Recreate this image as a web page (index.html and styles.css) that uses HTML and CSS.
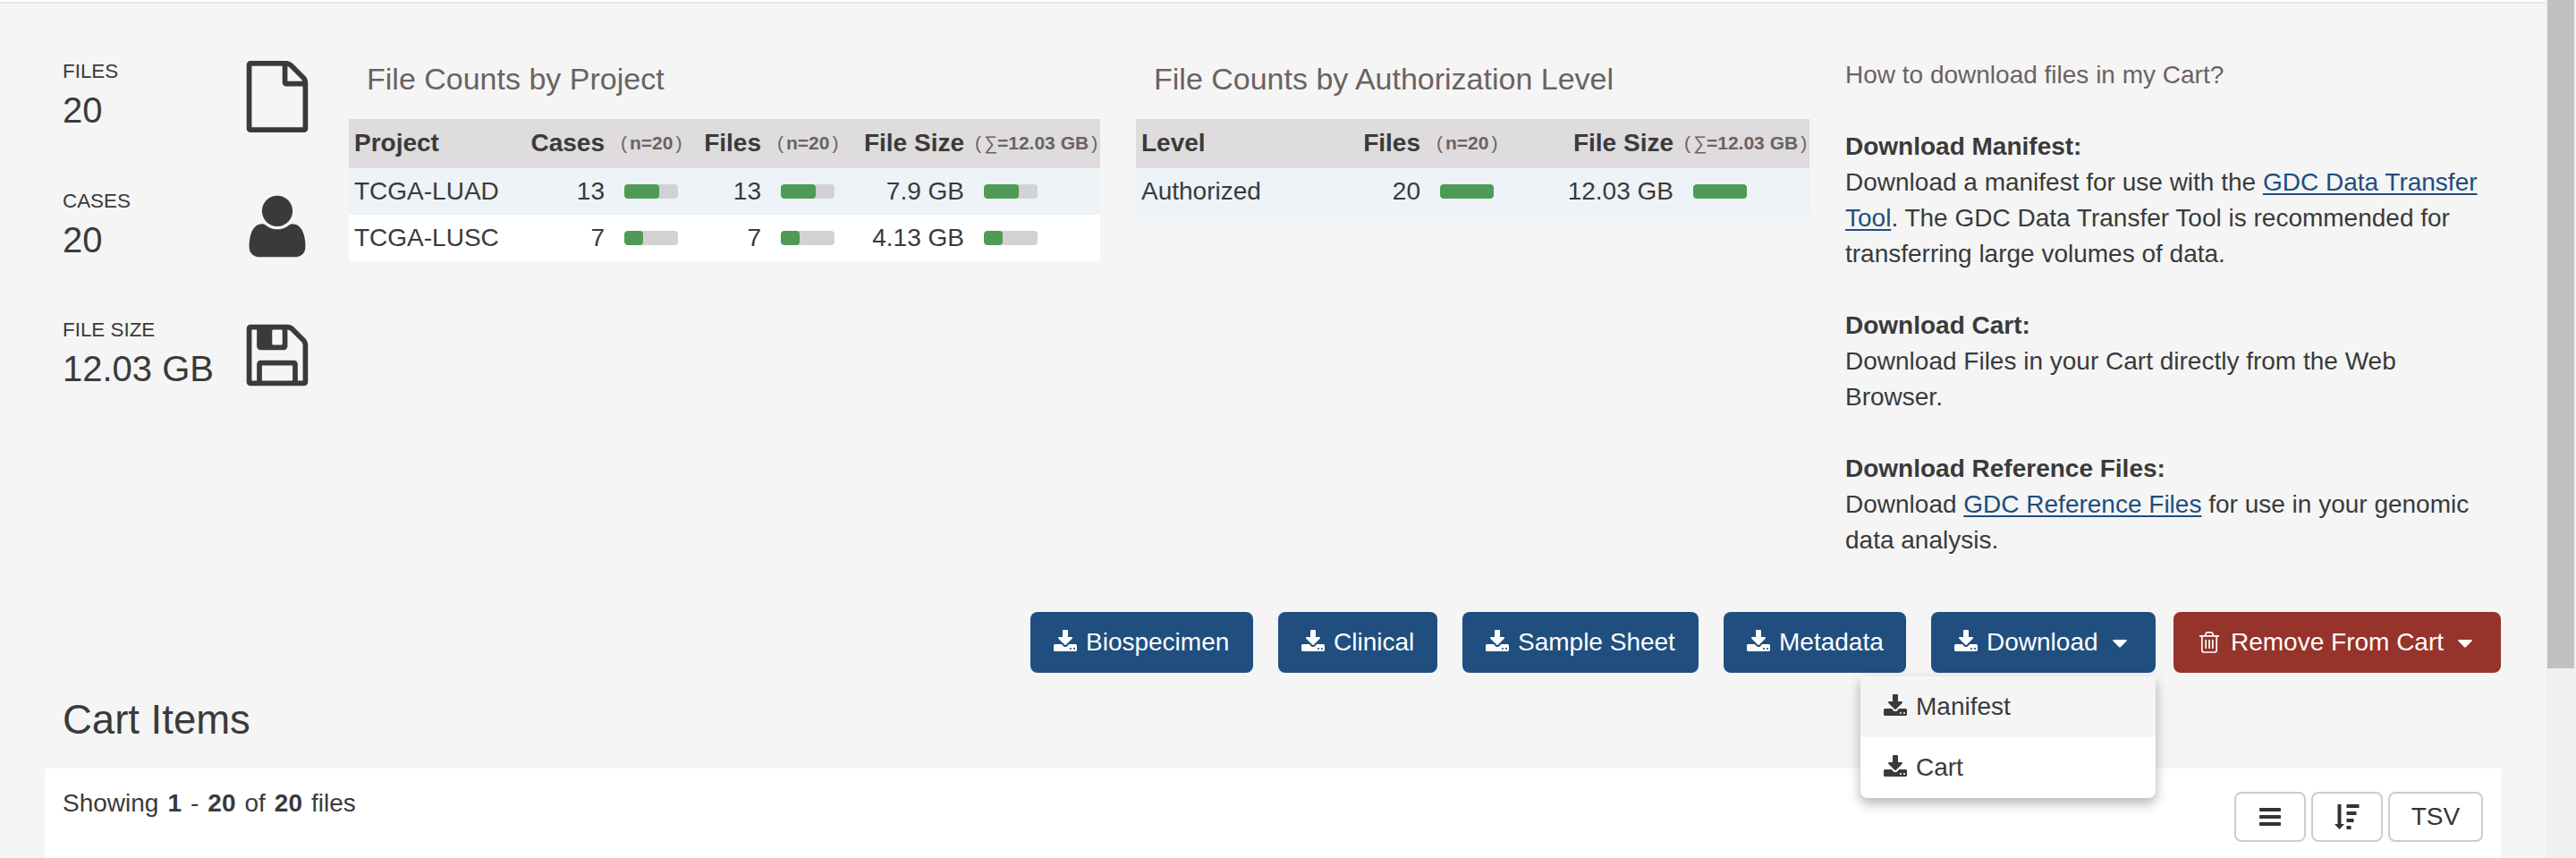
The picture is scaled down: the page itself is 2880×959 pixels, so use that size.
FILE: index.html
```html
<!DOCTYPE html>
<html lang="en">
<head>
<meta charset="utf-8">
<title>Cart</title>
<link rel="stylesheet" href="styles.css">
</head>
<body>
<svg class="sprite" aria-hidden="true">
  <symbol id="i-file" viewBox="0 0 1792 1792"><path d="M1596 380q28 28 48 76t20 88v1152q0 40-28 68t-68 28h-1344q-40 0-68-28t-28-68v-1600q0-40 28-68t68-28h896q40 0 88 20t76 48zm-444-244v376h376q-10-29-22-41l-313-313q-12-12-41-22zm384 1528v-1024h-416q-40 0-68-28t-28-68v-416h-768v1536h1280z"/></symbol>
  <symbol id="i-user" viewBox="0 0 1792 1792"><path d="M1600 1405q0 120-73 189.5t-194 69.5h-874q-121 0-194-69.5t-73-189.5q0-53 3.5-103.5t14-109 26.5-108.5 43-97.5 62-81 85.5-53.5 111.5-20q9 0 42 21.5t74.5 48 108 48 133.5 21.5 133.5-21.5 108-48 74.5-48 42-21.5q61 0 111.5 20t85.5 53.5 62 81 43 97.5 26.5 108.5 14 109 3.5 103.5zm-320-893q0 159-112.5 271.5t-271.5 112.5-271.5-112.5-112.5-271.5 112.5-271.5 271.5-112.5 271.5 112.5 112.5 271.5z"/></symbol>
  <symbol id="i-floppy" viewBox="0 0 1792 1792"><path d="M512 1536h768v-384h-768v384zm896 0h128v-896q0-14-10-38.5t-20-34.5l-281-281q-10-10-34-20t-39-10v416q0 40-28 68t-68 28h-576q-40 0-68-28t-28-68v-416h-128v1280h128v-416q0-40 28-68t68-28h832q40 0 68 28t28 68v416zm-384-928v-320q0-13-9.5-22.5t-22.5-9.5h-192q-13 0-22.5 9.5t-9.5 22.5v320q0 13 9.5 22.5t22.5 9.5h192q13 0 22.5-9.5t9.5-22.5zm640 32v928q0 40-28 68t-68 28h-1344q-40 0-68-28t-28-68v-1344q0-40 28-68t68-28h928q40 0 88 20t76 48l280 280q28 28 48 76t20 88z"/></symbol>
  <symbol id="i-download" viewBox="64 0 1664 1536"><path d="M1344 1344q0-26-19-45t-45-19-45 19-19 45 19 45 45 19 45-19 19-45zm256 0q0-26-19-45t-45-19-45 19-19 45 19 45 45 19 45-19 19-45zm128-224v320q0 40-28 68t-68 28h-1472q-40 0-68-28t-28-68v-320q0-40 28-68t68-28h465l135 136q58 56 136 56t136-56l136-136h464q40 0 68 28t28 68zm-325-569q17 41-14 70l-448 448q-18 19-45 19t-45-19l-448-448q-31-29-14-70 17-39 59-39h256v-448q0-26 19-45t45-19h256q26 0 45 19t19 45v448h256q42 0 59 39z"/></symbol>
  <symbol id="i-trash" viewBox="0 0 22 24"><path d="M0 4.800H22M2.800 5V20.500Q2.800 23 5 23H17Q19.200 23 19.200 20.500V5M6.300 4.500L7.500 1.700Q8 .9 9 .9H13Q14 .9 14.500 1.700L15.700 4.500M7.200 9V19M11 9V19M14.800 9V19" fill="none" stroke="currentColor" stroke-width="1.700"/></symbol>
  <symbol id="i-caret" viewBox="0 0 18 10"><path d="M1 0H17Q18.500 .3 17.500 1.500L10 9.300Q9 10.300 8 9.300L.5 1.500Q-.5 .3 1 0z"/></symbol>
  <symbol id="i-bars" viewBox="0 0 24 20"><rect width="24" height="4" rx="1"/><rect y="8" width="24" height="4" rx="1"/><rect y="16" width="24" height="4" rx="1"/></symbol>
  <symbol id="i-sort" viewBox="0 0 28 28"><path d="M3.500 0h4v22h3.500L5.500 28 0 22h3.500zM13.500 0h14v4h-14zM13.500 8h11v4h-11zM13.500 16h8v4h-8zM13.500 24h5v4h-5z"/></symbol>
</svg>

<div class="viewport">
  <main class="page">
    <section class="summary">
      <div class="stats">
        <div class="stat"><div><div class="stat-label">FILES</div><div class="stat-value">20</div></div><svg class="stat-icon"><use href="#i-file"/></svg></div>
        <div class="stat"><div><div class="stat-label">CASES</div><div class="stat-value">20</div></div><svg class="stat-icon"><use href="#i-user"/></svg></div>
        <div class="stat"><div><div class="stat-label">FILE SIZE</div><div class="stat-value">12.03 GB</div></div><svg class="stat-icon"><use href="#i-floppy"/></svg></div>
      </div>

      <div class="counts counts-project">
        <h2 class="counts-title">File Counts by Project</h2>
        <table class="table">
          <colgroup><col class="p1"><col class="p2"><col class="p3"><col class="p4"><col class="p5"><col class="p6"><col class="p7"></colgroup>
          <thead><tr><th>Project</th><th class="num">Cases</th><th class="total"><span class="paren">(</span>n=20<span class="paren">)</span></th><th class="num">Files</th><th class="total"><span class="paren">(</span>n=20<span class="paren">)</span></th><th class="num">File Size</th><th class="total sum"><span class="paren">(</span><span class="sigma">∑</span>=12.03 GB<span class="paren">)</span></th></tr></thead>
          <tbody>
            <tr><td>TCGA-LUAD</td><td class="num">13</td><td><div class="bar"><div class="fill" style="width:65%"></div></div></td><td class="num">13</td><td><div class="bar"><div class="fill" style="width:65%"></div></div></td><td class="num">7.9 GB</td><td class="size-bar"><div class="bar"><div class="fill" style="width:65.600%"></div></div></td></tr>
            <tr><td>TCGA-LUSC</td><td class="num">7</td><td><div class="bar"><div class="fill" style="width:35%"></div></div></td><td class="num">7</td><td><div class="bar"><div class="fill" style="width:35%"></div></div></td><td class="num">4.13 GB</td><td class="size-bar"><div class="bar"><div class="fill" style="width:34.400%"></div></div></td></tr>
          </tbody>
        </table>
      </div>

      <div class="counts counts-level">
        <h2 class="counts-title">File Counts by Authorization Level</h2>
        <table class="table">
          <colgroup><col class="l1"><col class="l2"><col class="l3"><col class="l4"><col class="l5"></colgroup>
          <thead><tr><th>Level</th><th class="num">Files</th><th class="total"><span class="paren">(</span>n=20<span class="paren">)</span></th><th class="num">File Size</th><th class="total sum"><span class="paren">(</span><span class="sigma">∑</span>=12.03 GB<span class="paren">)</span></th></tr></thead>
          <tbody>
            <tr><td>Authorized</td><td class="num">20</td><td><div class="bar"><div class="fill" style="width:100%"></div></div></td><td class="num">12.03 GB</td><td class="size-bar"><div class="bar"><div class="fill" style="width:100%"></div></div></td></tr>
          </tbody>
        </table>
      </div>

      <div class="help">
        <p class="help-title">How to download files in my Cart?</p>
        <p><strong>Download Manifest:</strong><br>Download a manifest for use with the <a href="#">GDC Data Transfer<br>Tool</a>. The GDC Data Transfer Tool is recommended for<br>transferring large volumes of data.</p>
        <p><strong>Download Cart:</strong><br>Download Files in your Cart directly from the Web<br>Browser.</p>
        <p><strong>Download Reference Files:</strong><br>Download <a href="#">GDC Reference Files</a> for use in your genomic<br>data analysis.</p>
      </div>
    </section>

    <div class="actions">
      <button class="btn w-bio"><svg class="dl"><use href="#i-download"/></svg>Biospecimen</button>
      <button class="btn w-clin"><svg class="dl"><use href="#i-download"/></svg>Clinical</button>
      <button class="btn w-sheet"><svg class="dl"><use href="#i-download"/></svg>Sample Sheet</button>
      <button class="btn w-meta"><svg class="dl"><use href="#i-download"/></svg>Metadata</button>
      <div class="dropdown">
        <button class="btn w-down"><svg class="dl"><use href="#i-download"/></svg>Download<svg class="caret"><use href="#i-caret"/></svg></button>
        <div class="menu">
          <div class="menu-item active"><svg class="dl"><use href="#i-download"/></svg>Manifest</div>
          <div class="menu-item"><svg class="dl"><use href="#i-download"/></svg>Cart</div>
        </div>
      </div>
      <button class="btn btn-remove"><svg class="trash"><use href="#i-trash"/></svg>Remove From Cart<svg class="caret"><use href="#i-caret"/></svg></button>
    </div>

    <h1 class="items-title">Cart Items</h1>
    <section class="panel">
      <div class="showing"><span>Showing</span><strong>1</strong><span>-</span><strong>20</strong><span>of</span><strong>20</strong><span>files</span></div>
      <div class="tools">
        <button class="tool"><svg class="bars"><use href="#i-bars"/></svg></button>
        <button class="tool"><svg class="sort"><use href="#i-sort"/></svg></button>
        <button class="tool tool-tsv">TSV</button>
      </div>
    </section>
  </main>
  <div class="scrollbar"><div class="thumb"></div></div>
</div>
</body>
</html>
```
FILE: styles.css
```css
* { box-sizing: border-box; }
body {
  margin: 0;
  background: #f5f5f5;
  color: #3a3a3a;
  font: 28px/40px "Liberation Sans", Arial, sans-serif;
}
.sprite { display: none; }
svg { fill: currentColor; flex: none; }
h1, h2, p { margin: 0; font-weight: 400; }
button { font: inherit; color: inherit; padding: 0; margin: 0; border: 0; }

.viewport { display: flex; height: 959px; overflow: hidden; }
.page {
  width: 2846px;
  padding: 0 50px;
  background: linear-gradient(#fff 0 2px, #e7e7e7 2px 4px, #f5f5f5 4px);
}
.scrollbar { width: 34px; padding: 0 2px; background: #f0f0f0; }
.thumb { height: 747px; background: #c1c1c1; }

.summary { display: flex; height: 684px; padding: 64px 0 0 20px; }

.stats { width: 320px; display: flex; flex-direction: column; gap: 64.500px; }
.stat { display: flex; justify-content: space-between; width: 280px; height: 80px; }
.stat-label { font-size: 22.400px; line-height: 31px; }
.stat-value { font-size: 40px; line-height: 56px; white-space: nowrap; }
.stat-icon { width: 80px; height: 80px; margin-top: 4px; }

.counts-project { width: 840px; margin-right: 40px; }
.counts-level { width: 753px; margin-right: 40px; }
.counts-title { height: 69px; padding-left: 20px; font-size: 34px; line-height: 48px; color: #6b6262; }
.table { width: 100%; border-collapse: collapse; table-layout: fixed; }
.table th, .table td { padding: 0; text-align: left; white-space: nowrap; }
.table th { padding-bottom: 2px; }
.table th:first-child, .table td:first-child { padding-left: 6px; }
.table thead tr { height: 55px; background: #dedcdd; }
.table tbody tr { height: 52px; background: #fff; }
.table tbody tr:nth-child(odd) { background: #edf3f7; }
.table .num { text-align: right; }
.table .total { padding-left: 18px; font-size: 21px; color: #6b6262; }
.table .sum { padding-left: 12px; }
.paren { font-weight: 400; }
.paren:first-child { margin-right: 3px; }
.paren:last-child { margin-left: 3px; }
.sigma { font-weight: 400; }
.p1 { width: 173px; } .p2 { width: 113px; } .p3 { width: 90px; } .p4 { width: 85px; } .p5 { width: 90px; } .p6 { width: 137px; }
.l1 { width: 168px; } .l2 { width: 150px; } .l3 { width: 100px; } .l4 { width: 183px; }
.bar { width: 60px; height: 16px; margin-left: 22px; border-radius: 4px; background: #d2d2d2; overflow: hidden; }
.fill { height: 16px; border-radius: 4px; background: #4f9a55; }

.help { width: 730px; white-space: nowrap; }
.help p + p { margin-top: 40px; }
.help-title { color: #6b6262; }
.help a { color: #204d7e; text-decoration: underline; text-decoration-thickness: 2px; text-underline-offset: 3px; }

.actions { display: flex; justify-content: flex-end; height: 68px; }
.btn { display: flex; align-items: center; height: 68px; margin-right: 28px; padding-left: 26px; border-radius: 8px; background: #204f7f; color: #fff; white-space: nowrap; }
.w-bio { width: 249px; } .w-clin { width: 178px; } .w-sheet { width: 264px; } .w-meta { width: 204px; }
.w-down { width: 251px; margin-right: 20px; }
.btn-remove { width: 366px; margin-right: 0; padding-left: 29px; background: #96332b; }
.dl { width: 26px; height: 24px; margin: -4px 10px 0 0; }
.trash { width: 22px; height: 24px; margin-right: 13px; }
.caret { width: 16px; height: 9px; margin: 2px 0 0 16px; }
.dropdown { position: relative; }
.menu { position: absolute; top: 72px; right: 20px; width: 330px; border-radius: 0 0 8px 8px; overflow: hidden; background: #fff; box-shadow: 0 6px 14px rgba(0, 0, 0, .3); }
.menu-item { display: flex; align-items: center; height: 68px; padding-left: 26px; }
.menu-item.active { background: #f5f5f5; }

.items-title { height: 107px; padding: 28px 0 0 20px; font-size: 45.500px; line-height: 50px; }
.panel { display: flex; justify-content: space-between; height: 100px; padding: 19px 20px 0; background: #fff; }
.showing { display: flex; gap: 10px; height: 40px; }
.tools { display: flex; gap: 6px; padding-top: 7px; }
.tool { display: flex; align-items: center; justify-content: center; width: 80px; height: 56px; border: 2px solid #ccc; border-radius: 8px; background: #fff; color: #333; }
.tool-tsv { width: 106px; }
.bars { width: 24px; height: 20px; }
.sort { width: 28px; height: 28px; }
```
